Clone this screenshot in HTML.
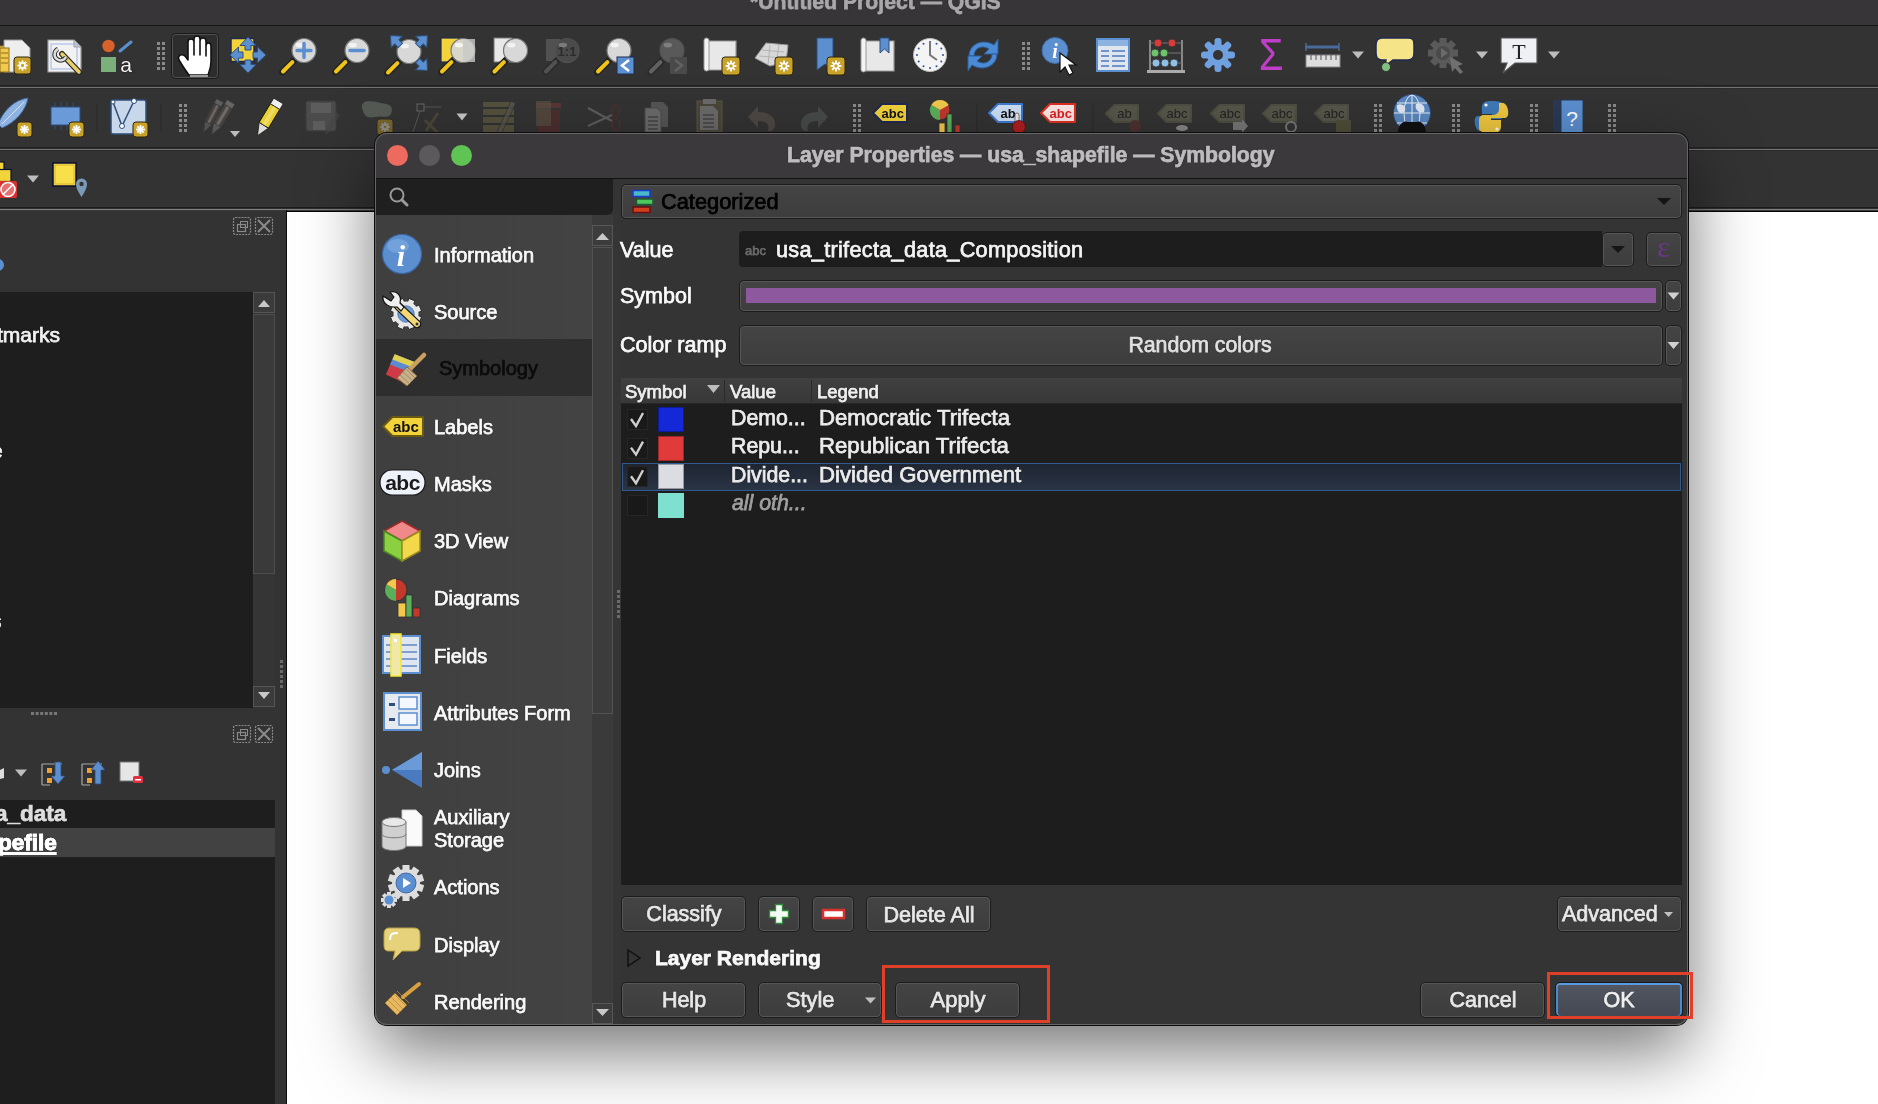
<!DOCTYPE html><html><head><meta charset="utf-8"><style>
*{box-sizing:border-box;margin:0;padding:0}
html,body{width:1878px;height:1104px;overflow:hidden;background:#333;font-family:"Liberation Sans",sans-serif;position:relative}
.a{position:absolute}
.t{position:absolute;white-space:nowrap;line-height:1;will-change:transform;-webkit-text-stroke:0.75px currentColor;text-shadow:0 0 1px rgba(0,0,0,.9),0 0 1.5px rgba(0,0,0,.6)}
.nh{text-shadow:none}
svg.full{position:absolute;left:0;top:0;width:1878px;height:1104px;overflow:visible}
.btn{position:absolute;border-radius:5px;border:1px solid #1c1c1c;background:linear-gradient(#444,#3d3d3d);box-shadow:inset 0 0 0 1px #565656}
</style></head><body>
<div class="a" style="left:0px;top:0px;width:1878px;height:25px;background:#373538"></div>
<div class="t" style="left:750.0px;top:-8.8px;font-size:21.2px;color:#a9a7aa;font-weight:bold;">*Untitled Project — QGIS</div>
<div class="a" style="left:0px;top:25px;width:1878px;height:1px;background:#161616"></div>
<div class="a" style="left:0px;top:26px;width:1878px;height:61px;background:#333"></div>
<div class="a" style="left:0px;top:85px;width:1878px;height:1px;background:#222"></div>
<div class="a" style="left:0px;top:86px;width:1878px;height:1px;background:#2b2b2b"></div>
<div class="a" style="left:0px;top:87px;width:1878px;height:1px;background:#727272"></div>
<div class="a" style="left:0px;top:88px;width:1878px;height:1px;background:#2c2c2c"></div>
<div class="a" style="left:0px;top:147px;width:1878px;height:1px;background:#222"></div>
<div class="a" style="left:0px;top:148px;width:1878px;height:1px;background:#2b2b2b"></div>
<div class="a" style="left:0px;top:149px;width:1878px;height:1px;background:#737373"></div>
<div class="a" style="left:0px;top:150px;width:1878px;height:1px;background:#2c2c2c"></div>
<div class="a" style="left:0px;top:207px;width:1878px;height:1px;background:#1c1c1c"></div>
<div class="a" style="left:0px;top:208px;width:1878px;height:1px;background:#2e2e2e"></div>
<div class="a" style="left:0px;top:209px;width:1878px;height:1px;background:#808080"></div>
<div class="a" style="left:0px;top:210px;width:1878px;height:1px;background:#3a3a3a"></div>
<svg class="full"><path d="M-4 46 H10 L13 42 H24 V70 H-4 Z" fill="#f2c94c" stroke="#8a6d1a" stroke-width="1"/><path d="M4 40 H22 L30 48 V72 H4 Z" fill="#eee" stroke="#999" stroke-width="1"/><rect x="0" y="48" width="9" height="24" fill="#f2c94c" stroke="#8a6d1a" stroke-width="1"/><line x1="1" y1="53" x2="8" y2="53" stroke="#8a6d1a"/><line x1="1" y1="58" x2="8" y2="58" stroke="#8a6d1a"/><line x1="1" y1="63" x2="8" y2="63" stroke="#8a6d1a"/><rect x="14" y="57" width="17" height="17" rx="3" fill="#c9a22a" stroke="#2a2410" stroke-width="1"/><line x1="17.4" y1="65.5" x2="27.6" y2="65.5" stroke="#fff" stroke-width="1.8"/><line x1="18.9" y1="61.9" x2="26.1" y2="69.1" stroke="#fff" stroke-width="1.8"/><line x1="22.5" y1="60.4" x2="22.5" y2="70.6" stroke="#fff" stroke-width="1.8"/><line x1="26.1" y1="61.9" x2="18.9" y2="69.1" stroke="#fff" stroke-width="1.8"/><circle cx="22.5" cy="65.5" r="2.4" fill="#c9a22a" stroke="#fff" stroke-width="1.5"/><path d="M48 40 H74 L81 47 V72 H48 Z" fill="#f2f2f2" stroke="#9a9a9a" stroke-width="1.2"/><path d="M74 40 V47 H81" fill="#ccc" stroke="#9a9a9a"/><rect x="51" y="44" width="26" height="25" fill="none" stroke="#9fb6e6" stroke-width="1"/><line x1="62" y1="54" x2="79" y2="72" stroke="#2b2b2b" stroke-width="6" stroke-linecap="round"/><line x1="62" y1="54" x2="79" y2="72" stroke="#e8cf6a" stroke-width="3.5" stroke-linecap="round"/><path d="M58 49 a6 6 0 1 0 8 8" fill="none" stroke="#2b2b2b" stroke-width="4.5"/><path d="M58 49 a6 6 0 1 0 8 8" fill="none" stroke="#ddd" stroke-width="2.5"/><circle cx="108.5" cy="46" r="6.2" fill="#d9622b"/><line x1="120" y1="51" x2="131" y2="42" stroke="#5b8fd0" stroke-width="3" stroke-linecap="round"/><rect x="101" y="57" width="15" height="15" fill="#7bb07b"/><text x="126" y="72" font-family="Liberation Sans" font-size="21" fill="#f0f0f0" text-anchor="middle" stroke="#222" stroke-width="1.2" paint-order="stroke">a</text><rect x="157" y="42" width="3" height="3" fill="#8a8a8a"/><rect x="162" y="42" width="3" height="3" fill="#8a8a8a"/><rect x="157" y="47" width="3" height="3" fill="#8a8a8a"/><rect x="162" y="47" width="3" height="3" fill="#8a8a8a"/><rect x="157" y="52" width="3" height="3" fill="#8a8a8a"/><rect x="162" y="52" width="3" height="3" fill="#8a8a8a"/><rect x="157" y="57" width="3" height="3" fill="#8a8a8a"/><rect x="162" y="57" width="3" height="3" fill="#8a8a8a"/><rect x="157" y="62" width="3" height="3" fill="#8a8a8a"/><rect x="162" y="62" width="3" height="3" fill="#8a8a8a"/><rect x="157" y="67" width="3" height="3" fill="#8a8a8a"/><rect x="162" y="67" width="3" height="3" fill="#8a8a8a"/><rect x="171.5" y="33.5" width="47" height="45" rx="4" fill="#2d2d2d" stroke="#1a1a1a" stroke-width="1"/><rect x="172.5" y="34.5" width="45" height="43" rx="3" fill="none" stroke="#505050" stroke-width="1"/><path d="M189 75 C185 70 182 65 179 60 C177 56 181 53 185 56 L188 60 V42 C188 38 194 38 194 42 V55 V39 C194 35 200 35 200 39 V55 V41 C200 37 206 37 206 41 V56 V46 C206 42 211 42 211 46 V62 C211 68 209 72 208 75 Z" fill="#fff" stroke="#111" stroke-width="1.6" stroke-linejoin="round"/><path d="M190 76 H208" stroke="#9a9a9a" stroke-width="2"/><rect x="231" y="38.5" width="23" height="23" fill="#f2d33a" stroke="#1f2a55" stroke-width="1.5"/><g transform="rotate(0 248 55)"><path d="M248 37 L256 45.5 H251 V50 H245 V45.5 H240 Z" fill="#5b8fd0" stroke="#2e4f7a" stroke-width="1"/></g><g transform="rotate(90 248 55)"><path d="M248 37 L256 45.5 H251 V50 H245 V45.5 H240 Z" fill="#5b8fd0" stroke="#2e4f7a" stroke-width="1"/></g><g transform="rotate(180 248 55)"><path d="M248 37 L256 45.5 H251 V50 H245 V45.5 H240 Z" fill="#5b8fd0" stroke="#2e4f7a" stroke-width="1"/></g><g transform="rotate(270 248 55)"><path d="M248 37 L256 45.5 H251 V50 H245 V45.5 H240 Z" fill="#5b8fd0" stroke="#2e4f7a" stroke-width="1"/></g><g><line x1="295.36" y1="59.14" x2="282.4" y2="72.1" stroke="#222" stroke-width="6.5" stroke-linecap="round"/><line x1="292.36" y1="62.14" x2="283.0" y2="71.5" stroke="#f0c419" stroke-width="4" stroke-linecap="round"/><circle cx="304" cy="50.5" r="12" fill="#d8d8d8" stroke="#777" stroke-width="1.2"/><ellipse cx="299.8" cy="45.1" rx="4.199999999999999" ry="2.4000000000000004" fill="#fff" opacity="0.7"/></g><path d="M297 50.5 H311 M304 43.5 V57.5" stroke="#5b8fd0" stroke-width="3.5" stroke-linecap="round"/><g><line x1="348.36" y1="59.14" x2="335.4" y2="72.1" stroke="#222" stroke-width="6.5" stroke-linecap="round"/><line x1="345.36" y1="62.14" x2="336.0" y2="71.5" stroke="#f0c419" stroke-width="4" stroke-linecap="round"/><circle cx="357" cy="50.5" r="12" fill="#d8d8d8" stroke="#777" stroke-width="1.2"/><ellipse cx="352.8" cy="45.1" rx="4.199999999999999" ry="2.4000000000000004" fill="#fff" opacity="0.7"/></g><path d="M350 50.5 H364" stroke="#5b8fd0" stroke-width="3.5" stroke-linecap="round"/><g><line x1="400.36" y1="60.14" x2="387.4" y2="73.1" stroke="#222" stroke-width="6.5" stroke-linecap="round"/><line x1="397.36" y1="63.14" x2="388.0" y2="72.5" stroke="#f0c419" stroke-width="4" stroke-linecap="round"/><circle cx="409" cy="51.5" r="12" fill="#d8d8d8" stroke="#777" stroke-width="1.2"/><ellipse cx="404.8" cy="46.1" rx="4.199999999999999" ry="2.4000000000000004" fill="#fff" opacity="0.7"/></g><g transform="translate(394,39) rotate(-45)"><path d="M0 -5 L8 4 H3 V9 H-3 V4 H-8 Z" fill="#5b8fd0" stroke="#2e4f7a" stroke-width="1"/></g><g transform="translate(424,39) rotate(45)"><path d="M0 -5 L8 4 H3 V9 H-3 V4 H-8 Z" fill="#5b8fd0" stroke="#2e4f7a" stroke-width="1"/></g><g transform="translate(424,67) rotate(135)"><path d="M0 -5 L8 4 H3 V9 H-3 V4 H-8 Z" fill="#5b8fd0" stroke="#2e4f7a" stroke-width="1"/></g><rect x="441" y="38" width="18" height="24" fill="#f2d33a" stroke="#1f2a55" stroke-width="1.2"/><g><line x1="454.36" y1="59.14" x2="441.4" y2="72.1" stroke="#222" stroke-width="6.5" stroke-linecap="round"/><line x1="451.36" y1="62.14" x2="442.0" y2="71.5" stroke="#f0c419" stroke-width="4" stroke-linecap="round"/><circle cx="463" cy="50.5" r="12" fill="#d8d6c8" stroke="#777" stroke-width="1.2"/><ellipse cx="458.8" cy="45.1" rx="4.199999999999999" ry="2.4000000000000004" fill="#fff" opacity="0.7"/></g><rect x="463" y="39" width="12" height="23" fill="#c8c8c8" opacity="0.8"/><rect x="494" y="38" width="18" height="24" fill="#e8e8e8" stroke="#777" stroke-width="1"/><g><line x1="506.86" y1="59.14" x2="493.9" y2="72.1" stroke="#222" stroke-width="6.5" stroke-linecap="round"/><line x1="503.86" y1="62.14" x2="494.5" y2="71.5" stroke="#f0c419" stroke-width="4" stroke-linecap="round"/><circle cx="515.5" cy="50.5" r="12" fill="#d8d8d8" stroke="#777" stroke-width="1.2"/><ellipse cx="511.3" cy="45.1" rx="4.199999999999999" ry="2.4000000000000004" fill="#fff" opacity="0.7"/></g><g opacity="0.45"><rect x="546" y="39" width="14" height="22" fill="#777"/><g><line x1="558.36" y1="59.14" x2="545.4" y2="72.1" stroke="#222" stroke-width="6.5" stroke-linecap="round"/><line x1="555.36" y1="62.14" x2="546.0" y2="71.5" stroke="#777" stroke-width="4" stroke-linecap="round"/><circle cx="567" cy="50.5" r="12" fill="#666" stroke="#777" stroke-width="1.2"/><ellipse cx="562.8" cy="45.1" rx="4.199999999999999" ry="2.4000000000000004" fill="#fff" opacity="0.7"/></g><text x="567" y="56" font-family="Liberation Sans" font-weight="bold" font-size="13" fill="#222" text-anchor="middle">1:1</text></g><g><line x1="610.36" y1="59.14" x2="597.4" y2="72.1" stroke="#222" stroke-width="6.5" stroke-linecap="round"/><line x1="607.36" y1="62.14" x2="598.0" y2="71.5" stroke="#f0c419" stroke-width="4" stroke-linecap="round"/><circle cx="619" cy="50.5" r="12" fill="#d8d8d8" stroke="#777" stroke-width="1.2"/><ellipse cx="614.8" cy="45.1" rx="4.199999999999999" ry="2.4000000000000004" fill="#fff" opacity="0.7"/></g><rect x="617" y="57" width="17" height="17" fill="#5b8fd0" stroke="#1f2a55" stroke-width="1"/><path d="M629 60 L622 65.5 L629 71" fill="none" stroke="#fff" stroke-width="2.5"/><g opacity="0.45"><g><line x1="663.36" y1="59.14" x2="650.4" y2="72.1" stroke="#222" stroke-width="6.5" stroke-linecap="round"/><line x1="660.36" y1="62.14" x2="651.0" y2="71.5" stroke="#999" stroke-width="4" stroke-linecap="round"/><circle cx="672" cy="50.5" r="12" fill="#888" stroke="#777" stroke-width="1.2"/><ellipse cx="667.8" cy="45.1" rx="4.199999999999999" ry="2.4000000000000004" fill="#fff" opacity="0.7"/></g><rect x="670" y="57" width="17" height="17" fill="#666"/><path d="M675 60 L682 65.5 L675 71" fill="none" stroke="#999" stroke-width="2.5"/></g><path d="M706 41 H736 V70 H710 C705 70 704 67 706 64 Z" fill="#e8e8e8" stroke="#999" stroke-width="1.2"/><rect x="704" y="38" width="5" height="33" rx="2.5" fill="#f4f4f4" stroke="#999"/><rect x="722" y="57" width="18" height="18" rx="3" fill="#c9a22a" stroke="#2a2410" stroke-width="1"/><line x1="725.6" y1="66.0" x2="736.4" y2="66.0" stroke="#fff" stroke-width="1.8"/><line x1="727.2" y1="62.2" x2="734.8" y2="69.8" stroke="#fff" stroke-width="1.8"/><line x1="731.0" y1="60.6" x2="731.0" y2="71.4" stroke="#fff" stroke-width="1.8"/><line x1="734.8" y1="62.2" x2="727.2" y2="69.8" stroke="#fff" stroke-width="1.8"/><circle cx="731.0" cy="66.0" r="2.5" fill="#c9a22a" stroke="#fff" stroke-width="1.5"/><path d="M755 58 L766 43 L788 45 L786 62 L770 66 Z" fill="#d8d8d8" stroke="#999" stroke-width="1"/><path d="M762 50 L784 52 M759 56 L782 58 M770 45 L768 65 M779 45 L776 64" stroke="#aaa" stroke-width="0.8" fill="none"/><rect x="775" y="57" width="18" height="18" rx="3" fill="#c9a22a" stroke="#2a2410" stroke-width="1"/><line x1="778.6" y1="66.0" x2="789.4" y2="66.0" stroke="#fff" stroke-width="1.8"/><line x1="780.2" y1="62.2" x2="787.8" y2="69.8" stroke="#fff" stroke-width="1.8"/><line x1="784.0" y1="60.6" x2="784.0" y2="71.4" stroke="#fff" stroke-width="1.8"/><line x1="787.8" y1="62.2" x2="780.2" y2="69.8" stroke="#fff" stroke-width="1.8"/><circle cx="784.0" cy="66.0" r="2.5" fill="#c9a22a" stroke="#fff" stroke-width="1.5"/><path d="M817 38 H833 V70 L825 64 L817 70 Z" fill="#5b8fd0" stroke="#2e4f7a" stroke-width="1"/><rect x="827" y="57" width="18" height="18" rx="3" fill="#c9a22a" stroke="#2a2410" stroke-width="1"/><line x1="830.6" y1="66.0" x2="841.4" y2="66.0" stroke="#fff" stroke-width="1.8"/><line x1="832.2" y1="62.2" x2="839.8" y2="69.8" stroke="#fff" stroke-width="1.8"/><line x1="836.0" y1="60.6" x2="836.0" y2="71.4" stroke="#fff" stroke-width="1.8"/><line x1="839.8" y1="62.2" x2="832.2" y2="69.8" stroke="#fff" stroke-width="1.8"/><circle cx="836.0" cy="66.0" r="2.5" fill="#c9a22a" stroke="#fff" stroke-width="1.5"/><path d="M864 41 H894 V71 H868 C862 71 862 67 864 65 Z" fill="#e8e8e8" stroke="#999" stroke-width="1.2"/><rect x="861" y="38" width="5" height="34" rx="2.5" fill="#f4f4f4" stroke="#999"/><path d="M880 38 H889 V53 L884.5 49 L880 53 Z" fill="#5b8fd0" stroke="#2e4f7a" stroke-width="1"/><circle cx="930" cy="55" r="16.5" fill="#f4f4f4" stroke="#bbb" stroke-width="1"/><circle cx="943.0" cy="55.0" r="1" fill="#2e4f9a"/><circle cx="941.3" cy="61.5" r="1" fill="#2e4f9a"/><circle cx="936.5" cy="66.3" r="1" fill="#2e4f9a"/><circle cx="930.0" cy="68.0" r="1" fill="#2e4f9a"/><circle cx="923.5" cy="66.3" r="1" fill="#2e4f9a"/><circle cx="918.7" cy="61.5" r="1" fill="#2e4f9a"/><circle cx="917.0" cy="55.0" r="1" fill="#2e4f9a"/><circle cx="918.7" cy="48.5" r="1" fill="#2e4f9a"/><circle cx="923.5" cy="43.7" r="1" fill="#2e4f9a"/><circle cx="930.0" cy="42.0" r="1" fill="#2e4f9a"/><circle cx="936.5" cy="43.7" r="1" fill="#2e4f9a"/><circle cx="941.3" cy="48.5" r="1" fill="#2e4f9a"/><path d="M930 42 V55 L937 60" fill="none" stroke="#777" stroke-width="2"/><path d="M969 56 C969 44 983 38 994 45 L998 39 V54 H984 L989 49 C981 44 974 49 974 56 Z" fill="#4a8ad6" stroke="#2e5f9a" stroke-width="1"/><path d="M997 54 C997 66 983 72 972 65 L968 71 V56 H982 L977 61 C985 66 992 61 992 54 Z" fill="#4a8ad6" stroke="#2e5f9a" stroke-width="1"/><rect x="1022" y="42" width="3" height="3" fill="#8a8a8a"/><rect x="1027" y="42" width="3" height="3" fill="#8a8a8a"/><rect x="1022" y="47" width="3" height="3" fill="#8a8a8a"/><rect x="1027" y="47" width="3" height="3" fill="#8a8a8a"/><rect x="1022" y="52" width="3" height="3" fill="#8a8a8a"/><rect x="1027" y="52" width="3" height="3" fill="#8a8a8a"/><rect x="1022" y="57" width="3" height="3" fill="#8a8a8a"/><rect x="1027" y="57" width="3" height="3" fill="#8a8a8a"/><rect x="1022" y="62" width="3" height="3" fill="#8a8a8a"/><rect x="1027" y="62" width="3" height="3" fill="#8a8a8a"/><rect x="1022" y="67" width="3" height="3" fill="#8a8a8a"/><rect x="1027" y="67" width="3" height="3" fill="#8a8a8a"/><circle cx="1055" cy="50.5" r="13" fill="#5b8fd0" stroke="#3e6aa6" stroke-width="1"/><text x="1055" y="58" font-family="Liberation Serif" font-style="italic" font-weight="bold" font-size="20" fill="#fff" text-anchor="middle">i</text><path d="M1060 53 L1060 72 L1065 67 L1069 75 L1073 73 L1069 65 L1076 65 Z" fill="#fff" stroke="#111" stroke-width="1.2"/><rect x="1097" y="39" width="32" height="32" fill="#dfe6f0" stroke="#5b8fd0" stroke-width="2"/><rect x="1098" y="40" width="30" height="6" fill="#8fb3e0"/><line x1="1101" y1="51" x2="1109" y2="51" stroke="#4a7ac0" stroke-width="1.5"/><line x1="1112" y1="51" x2="1125" y2="51" stroke="#4a7ac0" stroke-width="1.5"/><line x1="1101" y1="56" x2="1109" y2="56" stroke="#4a7ac0" stroke-width="1.5"/><line x1="1112" y1="56" x2="1125" y2="56" stroke="#4a7ac0" stroke-width="1.5"/><line x1="1101" y1="61" x2="1109" y2="61" stroke="#4a7ac0" stroke-width="1.5"/><line x1="1112" y1="61" x2="1125" y2="61" stroke="#4a7ac0" stroke-width="1.5"/><line x1="1101" y1="66" x2="1109" y2="66" stroke="#4a7ac0" stroke-width="1.5"/><line x1="1112" y1="66" x2="1125" y2="66" stroke="#4a7ac0" stroke-width="1.5"/><rect x="1149" y="40" width="2" height="30" fill="#888"/><rect x="1181" y="40" width="2" height="30" fill="#888"/><rect x="1147" y="70" width="38" height="3" fill="#aaa"/><line x1="1150" y1="43" x2="1182" y2="43" stroke="#777" stroke-width="1"/><circle cx="1158" cy="43" r="4" fill="#d93a3a" stroke="#333" stroke-width="0.8"/><circle cx="1172" cy="43" r="4" fill="#d93a3a" stroke="#333" stroke-width="0.8"/><line x1="1150" y1="53" x2="1182" y2="53" stroke="#777" stroke-width="1"/><circle cx="1155" cy="53" r="4" fill="#6cc46c" stroke="#333" stroke-width="0.8"/><circle cx="1164" cy="53" r="4" fill="#6cc46c" stroke="#333" stroke-width="0.8"/><line x1="1150" y1="63" x2="1182" y2="63" stroke="#777" stroke-width="1"/><circle cx="1156" cy="63" r="4" fill="#8fc0e8" stroke="#333" stroke-width="0.8"/><circle cx="1165" cy="63" r="4" fill="#8fc0e8" stroke="#333" stroke-width="0.8"/><circle cx="1174" cy="63" r="4" fill="#8fc0e8" stroke="#333" stroke-width="0.8"/><g transform="translate(1218,55)"><rect x="-3.5" y="-17" width="7" height="10" rx="3" fill="#6fa0e0" transform="rotate(0)"/><rect x="-3.5" y="-17" width="7" height="10" rx="3" fill="#6fa0e0" transform="rotate(45)"/><rect x="-3.5" y="-17" width="7" height="10" rx="3" fill="#6fa0e0" transform="rotate(90)"/><rect x="-3.5" y="-17" width="7" height="10" rx="3" fill="#6fa0e0" transform="rotate(135)"/><rect x="-3.5" y="-17" width="7" height="10" rx="3" fill="#6fa0e0" transform="rotate(180)"/><rect x="-3.5" y="-17" width="7" height="10" rx="3" fill="#6fa0e0" transform="rotate(225)"/><rect x="-3.5" y="-17" width="7" height="10" rx="3" fill="#6fa0e0" transform="rotate(270)"/><rect x="-3.5" y="-17" width="7" height="10" rx="3" fill="#6fa0e0" transform="rotate(315)"/><circle r="11" fill="#6fa0e0"/><circle r="5" fill="#333"/></g><text x="1271" y="70" font-family="Liberation Sans" font-size="40" fill="#c03ec8" text-anchor="middle" transform="translate(1271 0) scale(1 1.1) translate(-1271 -6.5)">Σ</text><line x1="1305" y1="47" x2="1339" y2="47" stroke="#4a6a9a" stroke-width="3"/><line x1="1306" y1="43" x2="1306" y2="51" stroke="#4a6a9a" stroke-width="1.5"/><line x1="1339" y1="43" x2="1339" y2="51" stroke="#4a6a9a" stroke-width="1.5"/><rect x="1306" y="55" width="34" height="12" fill="#ddd" stroke="#888" stroke-width="1"/><line x1="1311" y1="55" x2="1311" y2="60" stroke="#555" stroke-width="1"/><line x1="1316" y1="55" x2="1316" y2="60" stroke="#555" stroke-width="1"/><line x1="1321" y1="55" x2="1321" y2="60" stroke="#555" stroke-width="1"/><line x1="1326" y1="55" x2="1326" y2="60" stroke="#555" stroke-width="1"/><line x1="1331" y1="55" x2="1331" y2="60" stroke="#555" stroke-width="1"/><line x1="1336" y1="55" x2="1336" y2="60" stroke="#555" stroke-width="1"/><polygon points="1352.0,51.5 1364.0,51.5 1358,58.5" fill="#bdbdbd"/><path d="M1382 38 H1408 C1413 38 1414 40 1414 45 V53 C1414 58 1412 60 1408 60 H1393 L1385 66 L1386 60 H1382 C1378 60 1376 58 1376 53 V45 C1376 40 1378 38 1382 38 Z" fill="#f5e488" stroke="#1f2a55" stroke-width="1.5"/><circle cx="1386" cy="67" r="4.5" fill="#7fbf7f" stroke="#2a2a2a" stroke-width="0.8"/><g transform="translate(1443,53)"><rect x="-3.5" y="-15" width="7" height="8" fill="#5a5a5a" transform="rotate(0)"/><rect x="-3.5" y="-15" width="7" height="8" fill="#5a5a5a" transform="rotate(45)"/><rect x="-3.5" y="-15" width="7" height="8" fill="#5a5a5a" transform="rotate(90)"/><rect x="-3.5" y="-15" width="7" height="8" fill="#5a5a5a" transform="rotate(135)"/><rect x="-3.5" y="-15" width="7" height="8" fill="#5a5a5a" transform="rotate(180)"/><rect x="-3.5" y="-15" width="7" height="8" fill="#5a5a5a" transform="rotate(225)"/><rect x="-3.5" y="-15" width="7" height="8" fill="#5a5a5a" transform="rotate(270)"/><rect x="-3.5" y="-15" width="7" height="8" fill="#5a5a5a" transform="rotate(315)"/><circle r="11" fill="#5a5a5a"/><circle r="7" fill="#4a4a4a"/><path d="M-2 -5 L5 0 L-2 5 Z" fill="#6a6a6a"/></g><path d="M1450 57 L1452 72 L1455 68 L1460 74 L1463 72 L1458 66 L1463 64 Z" fill="#707070"/><polygon points="1476.0,51.5 1488.0,51.5 1482,58.5" fill="#bdbdbd"/><path d="M1501 38 H1537 V63 H1515 L1503 73 L1507 63 H1501 Z" fill="#eef0f3" stroke="#555" stroke-width="1.2"/><text x="1519" y="59" font-family="Liberation Serif" font-size="22" fill="#222" text-anchor="middle">T</text><polygon points="1548.0,51.5 1560.0,51.5 1554,58.5" fill="#bdbdbd"/><clipPath id="c2"><rect x="0" y="88" width="1878" height="59"/></clipPath><g clip-path="url(#c2)"><path d="M-2 124 C4 110 14 100 28 98 C26 110 16 122 2 128 Z" fill="#8fb3e0" stroke="#3e6aa6" stroke-width="1"/><path d="M2 124 L24 102" stroke="#eef" stroke-width="0.8"/><rect x="17" y="122" width="15" height="15" rx="3" fill="#c9a22a" stroke="#2a2410" stroke-width="1"/><line x1="20.0" y1="129.5" x2="29.0" y2="129.5" stroke="#fff" stroke-width="1.8"/><line x1="21.3" y1="126.3" x2="27.7" y2="132.7" stroke="#fff" stroke-width="1.8"/><line x1="24.5" y1="125.0" x2="24.5" y2="134.0" stroke="#fff" stroke-width="1.8"/><line x1="27.7" y1="126.3" x2="21.3" y2="132.7" stroke="#fff" stroke-width="1.8"/><rect x="51" y="107" width="29" height="18" fill="#6a9ad8" stroke="#2e4f7a" stroke-width="1"/><line x1="55" y1="102" x2="55" y2="107" stroke="#2e4f7a" stroke-width="1"/><line x1="55" y1="125" x2="55" y2="130" stroke="#2e4f7a" stroke-width="1"/><line x1="61" y1="102" x2="61" y2="107" stroke="#2e4f7a" stroke-width="1"/><line x1="61" y1="125" x2="61" y2="130" stroke="#2e4f7a" stroke-width="1"/><line x1="67" y1="102" x2="67" y2="107" stroke="#2e4f7a" stroke-width="1"/><line x1="67" y1="125" x2="67" y2="130" stroke="#2e4f7a" stroke-width="1"/><line x1="73" y1="102" x2="73" y2="107" stroke="#2e4f7a" stroke-width="1"/><line x1="73" y1="125" x2="73" y2="130" stroke="#2e4f7a" stroke-width="1"/><rect x="69" y="122" width="15" height="15" rx="3" fill="#c9a22a" stroke="#2a2410" stroke-width="1"/><line x1="72.0" y1="129.5" x2="81.0" y2="129.5" stroke="#fff" stroke-width="1.8"/><line x1="73.3" y1="126.3" x2="79.7" y2="132.7" stroke="#fff" stroke-width="1.8"/><line x1="76.5" y1="125.0" x2="76.5" y2="134.0" stroke="#fff" stroke-width="1.8"/><line x1="79.7" y1="126.3" x2="73.3" y2="132.7" stroke="#fff" stroke-width="1.8"/><line x1="97" y1="103" x2="97" y2="132" stroke="#2a2a2a" stroke-width="1"/><rect x="111" y="100" width="35" height="34" rx="2" fill="#c8d8ea" stroke="#2e4f7a" stroke-width="1.5"/><path d="M113 102 L122 126 L134 101" fill="none" stroke="#2e4f7a" stroke-width="1.5"/><circle cx="113" cy="102" r="2" fill="#fff" stroke="#2e4f7a"/><circle cx="134" cy="101" r="2.5" fill="#fff" stroke="#2e4f7a"/><circle cx="122" cy="126" r="2.5" fill="#fff" stroke="#2e4f7a"/><rect x="133" y="122" width="15" height="15" rx="3" fill="#c9a22a" stroke="#2a2410" stroke-width="1"/><line x1="136.0" y1="129.5" x2="145.0" y2="129.5" stroke="#fff" stroke-width="1.8"/><line x1="137.3" y1="126.3" x2="143.7" y2="132.7" stroke="#fff" stroke-width="1.8"/><line x1="140.5" y1="125.0" x2="140.5" y2="134.0" stroke="#fff" stroke-width="1.8"/><line x1="143.7" y1="126.3" x2="137.3" y2="132.7" stroke="#fff" stroke-width="1.8"/><line x1="161" y1="103" x2="161" y2="132" stroke="#2a2a2a" stroke-width="1"/><rect x="179" y="104" width="3" height="3" fill="#8a8a8a"/><rect x="184" y="104" width="3" height="3" fill="#8a8a8a"/><rect x="179" y="109" width="3" height="3" fill="#8a8a8a"/><rect x="184" y="109" width="3" height="3" fill="#8a8a8a"/><rect x="179" y="114" width="3" height="3" fill="#8a8a8a"/><rect x="184" y="114" width="3" height="3" fill="#8a8a8a"/><rect x="179" y="119" width="3" height="3" fill="#8a8a8a"/><rect x="184" y="119" width="3" height="3" fill="#8a8a8a"/><rect x="179" y="124" width="3" height="3" fill="#8a8a8a"/><rect x="184" y="124" width="3" height="3" fill="#8a8a8a"/><rect x="179" y="129" width="3" height="3" fill="#8a8a8a"/><rect x="184" y="129" width="3" height="3" fill="#8a8a8a"/><g opacity="0.8"><polygon points="203.5,132.5 204.9,121.1 212.0,124.7" fill="#5a5a5a" stroke="#3a3a3a" stroke-width="0.8"/><polygon points="204.9,121.1 214.1,103.1 221.2,106.8 212.0,124.7" fill="#4a4440" stroke="#3a3a3a" stroke-width="1"/><polygon points="207.3,122.3 216.5,104.4 218.9,105.6 209.6,123.5" fill="#fff" opacity="0.25"/><polygon points="214.1,103.1 216.4,98.7 223.6,102.3 221.2,106.8" fill="#6a6a6a" stroke="#3a3a3a" stroke-width="0.8"/></g><g opacity="0.85"><polygon points="211.5,134.5 213.5,122.4 221.2,127.1" fill="#606060" stroke="#3a3a3a" stroke-width="0.8"/><polygon points="213.5,122.4 224.4,104.2 232.1,108.9 221.2,127.1" fill="#4e4844" stroke="#3a3a3a" stroke-width="1"/><polygon points="216.1,124.0 227.0,105.8 229.6,107.3 218.6,125.5" fill="#fff" opacity="0.25"/><polygon points="224.4,104.2 227.1,99.7 234.9,104.3 232.1,108.9" fill="#707070" stroke="#3a3a3a" stroke-width="0.8"/></g><polygon points="230.0,131.0 240.0,131.0 235,137.0" fill="#bdbdbd"/><g><polygon points="257.5,135.7 259.1,122.4 268.5,128.1" fill="#dcdcdc" stroke="#1a1a10" stroke-width="0.8"/><polygon points="259.1,122.4 270.4,103.7 279.8,109.4 268.5,128.1" fill="#e8d030" stroke="#1a1a10" stroke-width="1"/><polygon points="262.2,124.3 273.6,105.6 276.7,107.5 265.4,126.2" fill="#fff" opacity="0.25"/><polygon points="270.4,103.7 273.8,98.2 283.2,103.8 279.8,109.4" fill="#f0f0f0" stroke="#1a1a10" stroke-width="0.8"/></g><g opacity="0.5"><rect x="306" y="101" width="30" height="30" rx="2" fill="#666" stroke="#444"/><rect x="311" y="103" width="20" height="10" fill="#888"/><rect x="313" y="121" width="12" height="9" fill="#888"/></g><path d="M326 130 L325 135 L330 132 L340 115 L336 112 Z" fill="#4a4544" opacity="0.6"/><path d="M362 108 C360 100 372 100 380 103 C390 104 394 106 391 114 C388 119 383 115 375 117 C365 119 364 114 362 108 Z" fill="#565a55"/><g opacity="0.45"><rect x="377" y="119" width="16" height="16" rx="3" fill="#c9a22a" stroke="#2a2410" stroke-width="1"/><line x1="380.2" y1="127.0" x2="389.8" y2="127.0" stroke="#fff" stroke-width="1.8"/><line x1="381.6" y1="123.6" x2="388.4" y2="130.4" stroke="#fff" stroke-width="1.8"/><line x1="385.0" y1="122.2" x2="385.0" y2="131.8" stroke="#fff" stroke-width="1.8"/><line x1="388.4" y1="123.6" x2="381.6" y2="130.4" stroke="#fff" stroke-width="1.8"/><circle cx="385.0" cy="127.0" r="2.2" fill="#c9a22a" stroke="#fff" stroke-width="1.5"/></g><g opacity="0.45"><rect x="417" y="104" width="7" height="7" fill="none" stroke="#aaa"/><line x1="424" y1="107" x2="441" y2="107" stroke="#888"/><line x1="420" y1="111" x2="413" y2="132" stroke="#888"/><path d="M425 120 L438 133 M438 113 L426 131" stroke="#6a6040" stroke-width="3"/></g><polygon points="456.5,113.5 467.5,113.5 462,120.5" fill="#c8c8c8"/><g opacity="0.4"><rect x="483" y="102" width="31" height="32" fill="#8a8050"/><line x1="483" y1="108" x2="514" y2="108" stroke="#333" stroke-width="2"/><line x1="483" y1="116" x2="514" y2="116" stroke="#333" stroke-width="2"/><line x1="483" y1="124" x2="514" y2="124" stroke="#333" stroke-width="2"/></g><path d="M497 132 L496 138 L501 134 L516 103 L511 101 Z" fill="#5a5550" stroke="#333" opacity="0.7"/><g opacity="0.45"><rect x="536" y="103" width="25" height="5" fill="#8a3a3a"/><rect x="538" y="110" width="22" height="24" fill="#6a2a2a"/><rect x="536" y="101" width="15" height="25" fill="#8a8060" opacity="0.6"/></g><g opacity="0.6"><path d="M588 108 L612 121 M588 126 L612 115" stroke="#7a7a7a" stroke-width="2"/><ellipse cx="616" cy="111" rx="4" ry="5.5" fill="none" stroke="#7a2a2a" stroke-width="1.2"/><ellipse cx="616" cy="125" rx="4" ry="5.5" fill="none" stroke="#7a2a2a" stroke-width="1.2"/></g><path d="M651 102 H663 L668 107 V127 H651 Z" fill="#555"/><path d="M645 108 H657 L661 112 V132 H645 Z" fill="#6a6a6a" stroke="#4a4a4a"/><line x1="648" y1="117" x2="658" y2="117" stroke="#3a3a3a" stroke-width="1.2"/><line x1="648" y1="121" x2="658" y2="121" stroke="#3a3a3a" stroke-width="1.2"/><line x1="648" y1="125" x2="658" y2="125" stroke="#3a3a3a" stroke-width="1.2"/><line x1="648" y1="129" x2="658" y2="129" stroke="#3a3a3a" stroke-width="1.2"/><rect x="697" y="101" width="25" height="31" fill="#4a4638" stroke="#5a5548"/><rect x="703" y="99" width="13" height="5" fill="#6a6a6a"/><path d="M700 106 H713 L718 111 V130 H700 Z" fill="#6a6a6a"/><line x1="703" y1="115" x2="714" y2="115" stroke="#3a3a3a" stroke-width="1.2"/><line x1="703" y1="119" x2="714" y2="119" stroke="#3a3a3a" stroke-width="1.2"/><line x1="703" y1="123" x2="714" y2="123" stroke="#3a3a3a" stroke-width="1.2"/><line x1="703" y1="127" x2="714" y2="127" stroke="#3a3a3a" stroke-width="1.2"/><path d="M748 117 L758 106 V112 C770 112 776 118 775 126 C774 131 770 132 768 131 C770 124 766 121 758 121 V128 Z" fill="#4e4844"/><path d="M828 117 L818 106 V112 C806 112 800 118 801 126 C802 131 806 132 808 131 C806 124 810 121 818 121 V128 Z" fill="#464a48"/><rect x="853" y="104" width="3" height="3" fill="#8a8a8a"/><rect x="858" y="104" width="3" height="3" fill="#8a8a8a"/><rect x="853" y="109" width="3" height="3" fill="#8a8a8a"/><rect x="858" y="109" width="3" height="3" fill="#8a8a8a"/><rect x="853" y="114" width="3" height="3" fill="#8a8a8a"/><rect x="858" y="114" width="3" height="3" fill="#8a8a8a"/><rect x="853" y="119" width="3" height="3" fill="#8a8a8a"/><rect x="858" y="119" width="3" height="3" fill="#8a8a8a"/><rect x="853" y="124" width="3" height="3" fill="#8a8a8a"/><rect x="858" y="124" width="3" height="3" fill="#8a8a8a"/><rect x="853" y="129" width="3" height="3" fill="#8a8a8a"/><rect x="858" y="129" width="3" height="3" fill="#8a8a8a"/><path d="M873 113.0 L882.0 104 H907 V122 H882.0 Z" fill="#f2d33a" stroke="#1f2a55" stroke-width="2" stroke-linejoin="round"/><text x="892.6999999999999" y="118.04" font-family="Liberation Sans" font-weight="bold" font-size="13" fill="#111" text-anchor="middle">abc</text><circle cx="940" cy="110" r="10" fill="#c0392b" stroke="#333" stroke-width="1"/><path d="M940 110 L931.3 105 A10 10 0 0 1 948.7 105 Z" fill="#f2c94c"/><path d="M940 110 L931.3 105 A10 10 0 0 0 940 120 Z" fill="#5ab05a"/><rect x="939" y="123" width="6" height="10" fill="#f2c94c" stroke="#333" stroke-width="0.8"/><rect x="947" y="114" width="5" height="19" fill="#5ab05a" stroke="#333" stroke-width="0.8"/><rect x="955" y="125" width="5" height="8" fill="#c0392b" stroke="#333" stroke-width="0.8"/><line x1="977" y1="103" x2="977" y2="132" stroke="#2a2a2a" stroke-width="1"/><path d="M989 113.0 L998.0 104 H1022 V122 H998.0 Z" fill="#cfe0f5" stroke="#3e7ad0" stroke-width="2" stroke-linejoin="round"/><text x="1008.1999999999999" y="118.04" font-family="Liberation Sans" font-weight="bold" font-size="13" fill="#111" text-anchor="middle">ab</text><rect x="1015" y="113" width="4" height="10" rx="2" fill="#eee" stroke="#555" stroke-width="0.8"/><circle cx="1019" cy="127" r="6.5" fill="#b01f1f" stroke="#5a1010" stroke-width="0.8"/><path d="M1041 113.0 L1050.0 104 H1075 V122 H1050.0 Z" fill="#fde8e8" stroke="#e03020" stroke-width="2" stroke-linejoin="round"/><text x="1060.7" y="118.04" font-family="Liberation Sans" font-weight="bold" font-size="13" fill="#e02020" text-anchor="middle">abc</text><line x1="1093" y1="103" x2="1093" y2="132" stroke="#2a2a2a" stroke-width="1"/><g opacity="0.5"><path d="M1106 113.5 L1114.5 105 H1138 V122 H1114.5 Z" fill="#7a7a62" stroke="#6a6a55" stroke-width="2" stroke-linejoin="round"/><text x="1124.55" y="118.26" font-family="Liberation Sans" font-weight="normal" font-size="13" fill="#111" text-anchor="middle">ab</text><circle cx="1135" cy="126" r="6" fill="#6a3030"/></g><g opacity="0.5"><path d="M1158 113.5 L1166.5 105 H1191 V122 H1166.5 Z" fill="#7a7a62" stroke="#6a6a55" stroke-width="2" stroke-linejoin="round"/><text x="1177.05" y="118.26" font-family="Liberation Sans" font-weight="normal" font-size="13" fill="#111" text-anchor="middle">abc</text><ellipse cx="1182" cy="128" rx="6" ry="3" fill="#ddd"/></g><g opacity="0.5"><path d="M1211 113.5 L1219.5 105 H1244 V122 H1219.5 Z" fill="#7a7a62" stroke="#6a6a55" stroke-width="2" stroke-linejoin="round"/><text x="1230.05" y="118.26" font-family="Liberation Sans" font-weight="normal" font-size="13" fill="#111" text-anchor="middle">abc</text><path d="M1233 122 H1242 V119 L1248 126 L1242 133 V130 H1233 Z" fill="#bbb"/></g><g opacity="0.5"><path d="M1263 113.5 L1271.5 105 H1296 V122 H1271.5 Z" fill="#7a7a62" stroke="#6a6a55" stroke-width="2" stroke-linejoin="round"/><text x="1282.05" y="118.26" font-family="Liberation Sans" font-weight="normal" font-size="13" fill="#111" text-anchor="middle">abc</text><circle cx="1291" cy="127" r="5" fill="none" stroke="#bbb" stroke-width="2"/></g><g opacity="0.5"><path d="M1315 113.5 L1323.5 105 H1348 V122 H1323.5 Z" fill="#7a7a62" stroke="#6a6a55" stroke-width="2" stroke-linejoin="round"/><text x="1334.05" y="118.26" font-family="Liberation Sans" font-weight="normal" font-size="13" fill="#111" text-anchor="middle">abc</text><rect x="1336" y="120" width="15" height="14" fill="#6a6a40"/></g><rect x="1374" y="104" width="3" height="3" fill="#8a8a8a"/><rect x="1379" y="104" width="3" height="3" fill="#8a8a8a"/><rect x="1374" y="109" width="3" height="3" fill="#8a8a8a"/><rect x="1379" y="109" width="3" height="3" fill="#8a8a8a"/><rect x="1374" y="114" width="3" height="3" fill="#8a8a8a"/><rect x="1379" y="114" width="3" height="3" fill="#8a8a8a"/><rect x="1374" y="119" width="3" height="3" fill="#8a8a8a"/><rect x="1379" y="119" width="3" height="3" fill="#8a8a8a"/><rect x="1374" y="124" width="3" height="3" fill="#8a8a8a"/><rect x="1379" y="124" width="3" height="3" fill="#8a8a8a"/><rect x="1374" y="129" width="3" height="3" fill="#8a8a8a"/><rect x="1379" y="129" width="3" height="3" fill="#8a8a8a"/><circle cx="1412" cy="113" r="18.5" fill="#5a88c0" stroke="#2e4f7a" stroke-width="1"/><path d="M1394 113 H1430 M1412 95 V131 M1397 103 H1427 M1397 123 H1427" stroke="#e8eef8" stroke-width="1" fill="none"/><ellipse cx="1412" cy="113" rx="8" ry="18" fill="none" stroke="#e8eef8" stroke-width="1"/><path d="M1397 105 C1402 102 1408 108 1404 112 C1400 116 1396 110 1397 105 Z M1416 104 C1422 102 1426 106 1424 112 C1420 114 1414 110 1416 104 Z" fill="#dfe8f4"/><path d="M1398 133 C1398 124 1404 120 1408 122 L1416 122 C1420 120 1426 124 1426 133 Z" fill="#111"/><rect x="1452" y="104" width="3" height="3" fill="#8a8a8a"/><rect x="1457" y="104" width="3" height="3" fill="#8a8a8a"/><rect x="1452" y="109" width="3" height="3" fill="#8a8a8a"/><rect x="1457" y="109" width="3" height="3" fill="#8a8a8a"/><rect x="1452" y="114" width="3" height="3" fill="#8a8a8a"/><rect x="1457" y="114" width="3" height="3" fill="#8a8a8a"/><rect x="1452" y="119" width="3" height="3" fill="#8a8a8a"/><rect x="1457" y="119" width="3" height="3" fill="#8a8a8a"/><rect x="1452" y="124" width="3" height="3" fill="#8a8a8a"/><rect x="1457" y="124" width="3" height="3" fill="#8a8a8a"/><rect x="1452" y="129" width="3" height="3" fill="#8a8a8a"/><rect x="1457" y="129" width="3" height="3" fill="#8a8a8a"/><path d="M1491 101 C1481 101 1482 106 1482 110 V114 H1492 V116 H1478 C1472 116 1475 131 1480 131 H1484 V125 C1484 121 1487 119 1491 119 H1499 C1502 119 1504 117 1504 114 V106 C1504 102 1499 101 1491 101 Z" fill="#3f7ab8"/><path d="M1492 133 C1502 133 1501 128 1501 124 V120 H1491 V118 H1505 C1511 118 1508 103 1503 103 H1499 V109 C1499 113 1496 115 1492 115 H1484 C1481 115 1479 117 1479 120 V128 C1479 132 1484 133 1492 133 Z" fill="#f0c840"/><circle cx="1486" cy="105" r="1.6" fill="#fff"/><circle cx="1497" cy="129" r="1.6" fill="#fff"/><rect x="1530" y="104" width="3" height="3" fill="#8a8a8a"/><rect x="1535" y="104" width="3" height="3" fill="#8a8a8a"/><rect x="1530" y="109" width="3" height="3" fill="#8a8a8a"/><rect x="1535" y="109" width="3" height="3" fill="#8a8a8a"/><rect x="1530" y="114" width="3" height="3" fill="#8a8a8a"/><rect x="1535" y="114" width="3" height="3" fill="#8a8a8a"/><rect x="1530" y="119" width="3" height="3" fill="#8a8a8a"/><rect x="1535" y="119" width="3" height="3" fill="#8a8a8a"/><rect x="1530" y="124" width="3" height="3" fill="#8a8a8a"/><rect x="1535" y="124" width="3" height="3" fill="#8a8a8a"/><rect x="1530" y="129" width="3" height="3" fill="#8a8a8a"/><rect x="1535" y="129" width="3" height="3" fill="#8a8a8a"/><rect x="1553" y="100" width="9" height="34" fill="#2a3a55"/><rect x="1561" y="100" width="22" height="34" fill="#5b8fd0" stroke="#2a3a55" stroke-width="1"/><text x="1572" y="126" font-family="Liberation Sans" font-size="21" fill="#fff" text-anchor="middle">?</text><rect x="1608" y="104" width="3" height="3" fill="#8a8a8a"/><rect x="1613" y="104" width="3" height="3" fill="#8a8a8a"/><rect x="1608" y="109" width="3" height="3" fill="#8a8a8a"/><rect x="1613" y="109" width="3" height="3" fill="#8a8a8a"/><rect x="1608" y="114" width="3" height="3" fill="#8a8a8a"/><rect x="1613" y="114" width="3" height="3" fill="#8a8a8a"/><rect x="1608" y="119" width="3" height="3" fill="#8a8a8a"/><rect x="1613" y="119" width="3" height="3" fill="#8a8a8a"/><rect x="1608" y="124" width="3" height="3" fill="#8a8a8a"/><rect x="1613" y="124" width="3" height="3" fill="#8a8a8a"/><rect x="1608" y="129" width="3" height="3" fill="#8a8a8a"/><rect x="1613" y="129" width="3" height="3" fill="#8a8a8a"/></g><rect x="-4" y="162" width="8" height="8" fill="#f2d33a" stroke="#0a1030" stroke-width="1.2"/><rect x="-4" y="169.5" width="15" height="12" fill="#f2d33a" stroke="#0a1030" stroke-width="1.2"/><rect x="-2" y="181" width="19" height="17" rx="2" fill="#d93030"/><circle cx="8" cy="189.5" r="7" fill="#e87070" stroke="#fff" stroke-width="1.6"/><line x1="3" y1="194.5" x2="13" y2="184.5" stroke="#fff" stroke-width="1.6"/><polygon points="27.0,175.5 39.0,175.5 33,182.5" fill="#bdbdbd"/><rect x="53" y="163" width="23" height="23" fill="#f8e04a" stroke="#0a1030" stroke-width="1.5"/><rect x="55" y="165" width="19" height="19" fill="none" stroke="#d8b030" stroke-width="1"/><path d="M81.5 197 C77 190 76 187 76 184 A5.5 5.5 0 1 1 87 184 C87 187 86 190 81.5 197 Z" fill="#7a9ab8"/><circle cx="81.5" cy="184" r="2.2" fill="#333"/></svg>
<div class="a" style="left:0px;top:211px;width:286px;height:893px;background:#333"></div>
<div class="a" style="left:286px;top:210px;width:1px;height:894px;background:#0c0c0c"></div>
<div class="a" style="left:0px;top:292px;width:253px;height:416px;background:#1e1e1e"></div>
<div class="a" style="left:253px;top:292px;width:22px;height:416px;background:#353535"></div>
<div class="a" style="left:253px;top:292px;width:22px;height:21px;border:1px solid #555;background:#3b3b3b"></div>
<div class="a" style="left:253px;top:314px;width:22px;height:260px;border:1px solid #4e4e4e;background:#3a3a3a"></div>
<div class="a" style="left:253px;top:686px;width:22px;height:21px;border:1px solid #555;background:#3b3b3b"></div>
<div class="t" style="left:-3.0px;top:323.6px;font-size:21px;color:#f2f2f2;">tmarks</div>
<div class="t" style="left:-9.0px;top:440.2px;font-size:21px;color:#f2f2f2;">e</div>
<div class="t" style="left:-9.0px;top:610.2px;font-size:21px;color:#f2f2f2;">s</div>
<div class="a" style="left:0px;top:800px;width:275px;height:304px;background:#1e1e1e"></div>
<div class="a" style="left:0px;top:828px;width:275px;height:29px;background:#424242"></div>
<div class="t" style="left:-5.3px;top:803.4px;font-size:22.5px;color:#dedede;font-weight:bold;">a_data</div>
<div class="t" style="left:-2.0px;top:831.9px;font-size:22.5px;color:#fff;font-weight:bold;text-decoration:underline;text-underline-offset:2px;text-decoration-thickness:2.5px;text-decoration-skip-ink:none">pefile</div>
<svg class="full"><polygon points="258,307 270,307 264,300" fill="#c8c8c8"/><polygon points="258,692 270,692 264,699" fill="#c8c8c8"/><rect x="233.5" y="217.5" width="17" height="17" rx="2" fill="none" stroke="#8a8a8a" stroke-width="1.2" stroke-dasharray="2 1"/><rect x="237.5" y="224.5" width="8" height="7" fill="none" stroke="#8a8a8a" stroke-width="1.2"/><rect x="240.5" y="221.5" width="7" height="6" fill="none" stroke="#8a8a8a" stroke-width="1"/><rect x="255.5" y="217.5" width="17" height="17" rx="2" fill="none" stroke="#8a8a8a" stroke-width="1.2" stroke-dasharray="2 1"/><path d="M258 220 L270 232 M270 220 L258 232" stroke="#8a8a8a" stroke-width="2"/><rect x="233.5" y="725.5" width="17" height="17" rx="2" fill="none" stroke="#8a8a8a" stroke-width="1.2" stroke-dasharray="2 1"/><rect x="237.5" y="732.5" width="8" height="7" fill="none" stroke="#8a8a8a" stroke-width="1.2"/><rect x="240.5" y="729.5" width="7" height="6" fill="none" stroke="#8a8a8a" stroke-width="1"/><rect x="255.5" y="725.5" width="17" height="17" rx="2" fill="none" stroke="#8a8a8a" stroke-width="1.2" stroke-dasharray="2 1"/><path d="M258 728 L270 740 M270 728 L258 740" stroke="#8a8a8a" stroke-width="2"/><circle cx="-2" cy="265" r="6" fill="#5b8fd0"/><rect x="31.0" y="712" width="3" height="3" fill="#777"/><rect x="35.6" y="712" width="3" height="3" fill="#777"/><rect x="40.2" y="712" width="3" height="3" fill="#777"/><rect x="44.8" y="712" width="3" height="3" fill="#777"/><rect x="49.4" y="712" width="3" height="3" fill="#777"/><rect x="54.0" y="712" width="3" height="3" fill="#777"/><rect x="280" y="660" width="3" height="3" fill="#6a6a6a"/><rect x="280" y="665" width="3" height="3" fill="#6a6a6a"/><rect x="280" y="670" width="3" height="3" fill="#6a6a6a"/><rect x="280" y="675" width="3" height="3" fill="#6a6a6a"/><rect x="280" y="680" width="3" height="3" fill="#6a6a6a"/><rect x="280" y="685" width="3" height="3" fill="#6a6a6a"/><path d="M-4 772 L4 768 V778 L-4 780 Z" fill="#ddd"/><polygon points="15.0,769.5 27.0,769.5 21,776.5" fill="#bdbdbd"/><path d="M42 764 H62 M42 764 V785 M42 785 H50" stroke="#aaa" stroke-width="1.2" fill="none"/><rect x="47" y="768" width="5" height="5" fill="#f0a030"/><rect x="47" y="778" width="5" height="5" fill="#f0a030"/><path d="M55 762 H61 V776 H65 L58 784 L51 776 H55 Z" fill="#5b8fd0" stroke="#2e4f7a" stroke-width="0.8"/><path d="M82 764 H102 M82 764 V785 M82 785 H90" stroke="#aaa" stroke-width="1.2" fill="none"/><rect x="87" y="768" width="5" height="5" fill="#f0a030"/><rect x="87" y="778" width="5" height="5" fill="#f0a030"/><path d="M95 784 H101 V770 H105 L98 761 L91 770 H95 Z" fill="#5b8fd0" stroke="#2e4f7a" stroke-width="0.8"/><rect x="120" y="762" width="19" height="19" fill="#e6e6e6" stroke="#777" stroke-width="1"/><rect x="133" y="776" width="10" height="7" rx="1.5" fill="#e03040"/><rect x="135" y="779" width="6" height="1.5" fill="#fff"/></svg>
<div class="a" style="left:287px;top:212px;width:1591px;height:892px;background:#fff"></div>
<div class="a" style="left:286px;top:211px;width:1592px;height:1px;background:#050505"></div>
<div class="a" style="left:375px;top:133px;width:1313px;height:892px;border-radius:12px;box-shadow:0 26px 70px rgba(0,0,0,.55),0 0 0 1px #101010"></div>
<div class="a" style="left:375px;top:133px;width:1313px;height:892px;border-radius:12px;background:#343434;overflow:hidden"><div class="a" style="left:-375px;top:-133px;width:1878px;height:1104px">
<div class="a" style="left:375px;top:133px;width:1313px;height:45px;background:#3b393c"></div>
<div class="a" style="left:375px;top:178px;width:1313px;height:1px;background:#121212"></div>
<div class="a" style="left:386.5px;top:145px;width:21px;height:21px;border-radius:50%;background:#ec6a5e"></div>
<div class="a" style="left:418.5px;top:145px;width:21px;height:21px;border-radius:50%;background:#5b595c"></div>
<div class="a" style="left:450.5px;top:145px;width:21px;height:21px;border-radius:50%;background:#5fc454"></div>
<div class="t" style="left:787.0px;top:144.0px;font-size:21.2px;color:#bebcbf;font-weight:bold;">Layer Properties — usa_shapefile — Symbology</div>
<div class="a" style="left:376px;top:179px;width:237px;height:36px;background:#1f1f1f;border-radius:0 0 6px 0"></div>
<div class="a" style="left:376px;top:215px;width:216px;height:810px;background:linear-gradient(90deg,#3f3f3f,#434343)"></div>
<div class="a" style="left:592px;top:215px;width:21px;height:810px;background:#3a3a3a"></div>
<div class="a" style="left:613px;top:215px;width:8px;height:810px;background:#353535"></div>
<div class="a" style="left:592px;top:225px;width:21px;height:21px;border:1px solid #575757;background:#3c3c3c"></div>
<div class="a" style="left:592px;top:247px;width:21px;height:467px;border:1px solid #535353;background:#3c3c3c"></div>
<div class="a" style="left:592px;top:1003px;width:21px;height:21px;border:1px solid #575757;background:#3c3c3c"></div>
<div class="a" style="left:376px;top:339px;width:216px;height:57px;background:#2e2e2e"></div>
<div class="t" style="left:434.0px;top:244.7px;font-size:20px;color:#fafafa;">Information</div>
<div class="t" style="left:434.0px;top:301.7px;font-size:20px;color:#fafafa;">Source</div>
<div class="t" style="left:434.0px;top:416.7px;font-size:20px;color:#fafafa;">Labels</div>
<div class="t" style="left:434.0px;top:473.9px;font-size:20px;color:#fafafa;">Masks</div>
<div class="t" style="left:434.0px;top:531.1px;font-size:20px;color:#fafafa;">3D View</div>
<div class="t" style="left:434.0px;top:588.3px;font-size:20px;color:#fafafa;">Diagrams</div>
<div class="t" style="left:434.0px;top:645.5px;font-size:20px;color:#fafafa;">Fields</div>
<div class="t" style="left:434.0px;top:702.7px;font-size:20px;color:#fafafa;">Attributes Form</div>
<div class="t" style="left:434.0px;top:759.9px;font-size:20px;color:#fafafa;">Joins</div>
<div class="t" style="left:434.0px;top:806.9px;font-size:20px;color:#fafafa;">Auxiliary</div>
<div class="t" style="left:434.0px;top:829.7px;font-size:20px;color:#fafafa;">Storage</div>
<div class="t" style="left:434.0px;top:877.1px;font-size:20px;color:#fafafa;">Actions</div>
<div class="t" style="left:434.0px;top:934.5px;font-size:20px;color:#fafafa;">Display</div>
<div class="t" style="left:434.0px;top:992.1px;font-size:20px;color:#fafafa;">Rendering</div>
<div class="t" style="left:439.0px;top:358.3px;font-size:20px;color:#0c0c0c;text-shadow:none">Symbology</div>
<div class="btn" style="left:621px;top:184px;width:1061px;height:35px;"></div>
<div class="t" style="left:660.5px;top:190.5px;font-size:21.8px;color:#000;text-shadow:none">Categorized</div>
<div class="t" style="left:620.4px;top:239.8px;font-size:21.5px;color:#fafafa;">Value</div>
<div class="a" style="left:739px;top:231px;width:863px;height:36px;background:#1d1d1d;border-radius:4px 0 0 4px"></div>
<div class="t" style="left:745.0px;top:243.5px;font-size:13px;color:#6a6a6a;">abc</div>
<div class="t" style="left:776.3px;top:239.1px;font-size:21.7px;color:#f4f4f4;letter-spacing:0.29px">usa_trifecta_data_Composition</div>
<div class="btn" style="left:1602px;top:232px;width:32px;height:35px;"></div>
<div class="btn" style="left:1646px;top:232px;width:36px;height:35px;"></div>
<div class="t" style="left:620.4px;top:285.5px;font-size:21.5px;color:#fafafa;">Symbol</div>
<div class="btn" style="left:739px;top:280px;width:924px;height:32px;"></div>
<div class="a" style="left:746px;top:288px;width:910px;height:15px;background:#8e589e"></div>
<div class="btn" style="left:1665px;top:280px;width:17px;height:32px;"></div>
<div class="t" style="left:620.4px;top:335.0px;font-size:21.5px;color:#fafafa;">Color ramp</div>
<div class="btn" style="left:739px;top:325px;width:924px;height:41px;"></div>
<div class="t" style="left:900px;width:600px;text-align:center;top:335.2px;font-size:21.3px;color:#e2e2e2;">Random colors</div>
<div class="btn" style="left:1665px;top:325px;width:17px;height:41px;"></div>
<div class="a" style="left:621px;top:378px;width:1061px;height:26px;background:linear-gradient(#404040,#383838);border-bottom:1px solid #262626"></div>
<div class="a" style="left:724px;top:380px;width:1px;height:22px;background:#2a2a2a"></div>
<div class="a" style="left:811px;top:380px;width:1px;height:22px;background:#2a2a2a"></div>
<div class="a" style="left:621px;top:404px;width:1061px;height:481px;background:#1d1d1d"></div>
<div class="t" style="left:624.6px;top:382.6px;font-size:18.5px;color:#f0f0f0;">Symbol</div>
<div class="t" style="left:729.7px;top:382.6px;font-size:18.5px;color:#f0f0f0;">Value</div>
<div class="t" style="left:817.4px;top:382.6px;font-size:18.5px;color:#f0f0f0;">Legend</div>
<div class="a" style="left:622px;top:463px;width:1059px;height:28px;border:1px solid #2f5a8e;background:linear-gradient(#1f2530,#2a3446)"></div>
<div class="a" style="left:626.5px;top:409px;width:21px;height:21px;background:#191919;border:1px solid #262626"></div>
<div class="a" style="left:658px;top:407px;width:26px;height:25px;background:#1428d8;border:1px solid rgba(0,0,0,.3)"></div>
<div class="t" style="left:731.2px;top:407.5px;font-size:21.3px;color:#ececec;">Demo...</div>
<div class="t" style="left:818.7px;top:406.7px;font-size:22.2px;color:#ececec;">Democratic Trifecta</div>
<div class="a" style="left:626.5px;top:438px;width:21px;height:21px;background:#191919;border:1px solid #262626"></div>
<div class="a" style="left:658px;top:436px;width:26px;height:25px;background:#e03a3a;border:1px solid rgba(0,0,0,.3)"></div>
<div class="t" style="left:731.2px;top:436.1px;font-size:21.3px;color:#ececec;">Repu...</div>
<div class="t" style="left:818.7px;top:435.3px;font-size:22.2px;color:#ececec;">Republican Trifecta</div>
<div class="a" style="left:626.5px;top:466px;width:21px;height:21px;background:#191919;border:1px solid #262626"></div>
<div class="a" style="left:658px;top:464px;width:26px;height:25px;background:#dcdde3;border:1px solid rgba(0,0,0,.3)"></div>
<div class="t" style="left:731.2px;top:464.7px;font-size:21.3px;color:#ececec;">Divide...</div>
<div class="t" style="left:818.7px;top:463.9px;font-size:22.2px;color:#ececec;">Divided Government</div>
<div class="a" style="left:626.5px;top:495px;width:21px;height:21px;background:#191919;border:1px solid #262626"></div>
<div class="a" style="left:658px;top:493px;width:26px;height:25px;background:#7fe0cf"></div>
<div class="t" style="left:732.0px;top:493.2px;font-size:21.3px;color:#a0a0a0;font-style:italic;">all oth...</div>
<div class="btn" style="left:621px;top:896px;width:125px;height:36px;"></div>
<div class="btn" style="left:758px;top:896px;width:42px;height:36px;"></div>
<div class="btn" style="left:812px;top:896px;width:42px;height:36px;"></div>
<div class="btn" style="left:866px;top:896px;width:125px;height:36px;"></div>
<div class="btn" style="left:1557px;top:896px;width:125px;height:36px;"></div>
<div class="t" style="left:383.5px;width:600px;text-align:center;top:904.4px;font-size:21.5px;color:#e8e8e8;">Classify</div>
<div class="t" style="left:628.5px;width:600px;text-align:center;top:904.3px;font-size:21.6px;color:#e8e8e8;">Delete All</div>
<div class="t" style="left:561.0px;top:-0.8px;font-size:1px;color:#fff;"></div>
<div class="t" style="left:1562.0px;top:904.4px;font-size:21.5px;color:#e8e8e8;">Advanced</div>
<div class="t" style="left:655.0px;top:947.2px;font-size:21px;color:#fafafa;font-weight:bold;">Layer Rendering</div>
<div class="btn" style="left:621px;top:982px;width:125px;height:36px;"></div>
<div class="btn" style="left:758px;top:982px;width:124px;height:36px;"></div>
<div class="btn" style="left:895px;top:982px;width:125px;height:36px;"></div>
<div class="btn" style="left:1420px;top:982px;width:125px;height:36px;"></div>
<div class="btn" style="left:1555px;top:982px;width:128px;height:35px;background:linear-gradient(#525762,#434852);border:1px solid #1a1a1a;box-shadow:inset 0 2px 0 #5a9be0,inset 2px 0 0 #4a8ad0,inset -2px 0 0 #4a8ad0"></div>
<div class="t" style="left:383.5px;width:600px;text-align:center;top:989.6px;font-size:21.5px;color:#e8e8e8;">Help</div>
<div class="t" style="left:786.4px;top:989.3px;font-size:21.8px;color:#e8e8e8;">Style</div>
<div class="t" style="left:657.5px;width:600px;text-align:center;top:989.2px;font-size:22px;color:#e8e8e8;">Apply</div>
<div class="t" style="left:1182.5px;width:600px;text-align:center;top:989.6px;font-size:21.5px;color:#e8e8e8;">Cancel</div>
<div class="t" style="left:1319px;width:600px;text-align:center;top:989.6px;font-size:21.5px;color:#f0f0f0;">OK</div>
<svg class="full"><circle cx="402" cy="254" r="19.5" fill="#5b8fd0" stroke="#3a6aa8" stroke-width="1.2"/><ellipse cx="398" cy="246" rx="11" ry="7" fill="#8ab4e6" opacity="0.5"/><text x="401" y="266" font-family="Liberation Serif" font-style="italic" font-weight="bold" font-size="30" fill="#fff" text-anchor="middle">i</text><g transform="translate(406,314)"><rect x="-3.2" y="-15.5" width="6.4" height="7" fill="#e8e8e8" stroke="#222" stroke-width="0.8" transform="rotate(22.5)"/><rect x="-3.2" y="-15.5" width="6.4" height="7" fill="#e8e8e8" stroke="#222" stroke-width="0.8" transform="rotate(67.5)"/><rect x="-3.2" y="-15.5" width="6.4" height="7" fill="#e8e8e8" stroke="#222" stroke-width="0.8" transform="rotate(112.5)"/><rect x="-3.2" y="-15.5" width="6.4" height="7" fill="#e8e8e8" stroke="#222" stroke-width="0.8" transform="rotate(157.5)"/><rect x="-3.2" y="-15.5" width="6.4" height="7" fill="#e8e8e8" stroke="#222" stroke-width="0.8" transform="rotate(202.5)"/><rect x="-3.2" y="-15.5" width="6.4" height="7" fill="#e8e8e8" stroke="#222" stroke-width="0.8" transform="rotate(247.5)"/><rect x="-3.2" y="-15.5" width="6.4" height="7" fill="#e8e8e8" stroke="#222" stroke-width="0.8" transform="rotate(292.5)"/><rect x="-3.2" y="-15.5" width="6.4" height="7" fill="#e8e8e8" stroke="#222" stroke-width="0.8" transform="rotate(337.5)"/><circle r="12.5" fill="#e8e8e8"/><circle r="8.3" fill="#6a9ad8" stroke="#3a5a8a" stroke-width="0.6"/></g><line x1="398" y1="306" x2="417" y2="324" stroke="#111" stroke-width="8.5" stroke-linecap="round"/><line x1="398" y1="306" x2="417" y2="324" stroke="#f0d878" stroke-width="6" stroke-linecap="round"/><circle cx="417" cy="324" r="1.5" fill="#333"/><path d="M383 296 C382 304 390 308 397 307 L401 311 L404 307 L400 303 C402 296 397 290 390 292 L394 297 L391 301 Z" fill="#f0f0f0" stroke="#111" stroke-width="1.2" stroke-linejoin="round"/><path d="M394.7 354.3 L414.5 362 L408.3 385 L385.9 374.6 Z" fill="#d03a44"/><path d="M394.7 354.3 L414.5 362 L411.5 373 L390 364.5 Z" fill="#5a8ad0"/><path d="M394.7 354.3 L414.5 362 L413 367.5 L392.5 359.5 Z" fill="#e0d050"/><line x1="410" y1="369" x2="424" y2="355" stroke="#c9a060" stroke-width="4.5" stroke-linecap="round"/><path d="M397 378 L407 367 L417 376 L407 386 Z" fill="#c8b088" stroke="#8a6a40" stroke-width="1"/><path d="M400 375 L410 384 M403 372 L413 381 M406 369 L415 378" stroke="#9a8060" stroke-width="0.8"/><path d="M383 426.5 L392.5 417 H423 V436 H392.5 Z" fill="#f2d33a" stroke="#6a5a10" stroke-width="2" stroke-linejoin="round"/><text x="405.84999999999997" y="431.82" font-family="Liberation Sans" font-weight="bold" font-size="15" fill="#111" text-anchor="middle">abc</text><rect x="380" y="470" width="45" height="25" rx="12" fill="#eef2fa" stroke="#1a1a1a" stroke-width="1.2"/><text x="402.5" y="489.5" font-family="Liberation Sans" font-weight="bold" font-size="21" fill="#1a1a1a" text-anchor="middle" letter-spacing="-0.5">abc</text><path d="M402 521 L420 531 L402 541 L384 531 Z" fill="#f08a8a" stroke="#a02a2a" stroke-width="1.5"/><path d="M384 531 L402 541 V561 L384 551 Z" fill="#8ad040" stroke="#4a8a20" stroke-width="1.5"/><path d="M420 531 L402 541 V561 L420 551 Z" fill="#f2d84a" stroke="#9a8a20" stroke-width="1.5"/><circle cx="396" cy="590" r="11" fill="#c0392b" stroke="#333" stroke-width="1"/><path d="M396 590 L396 579 A11 11 0 0 0 386.5 584.5 Z" fill="#f2c94c"/><path d="M396 590 L386.5 584.5 A11 11 0 0 0 396 601 Z" fill="#5ab05a"/><rect x="398" y="603" width="8" height="14" fill="#f2c94c" stroke="#333" stroke-width="0.8"/><rect x="406" y="595" width="6" height="22" fill="#5ab05a" stroke="#333" stroke-width="0.8"/><rect x="413" y="608" width="7" height="9" fill="#c0392b" stroke="#333" stroke-width="0.8"/><rect x="383" y="636" width="37" height="37" fill="#dfe6f0" stroke="#5b8fd0" stroke-width="2"/><line x1="386" y1="645" x2="417" y2="645" stroke="#4a7ac0" stroke-width="1.3"/><line x1="386" y1="652" x2="417" y2="652" stroke="#4a7ac0" stroke-width="1.3"/><line x1="386" y1="659" x2="417" y2="659" stroke="#4a7ac0" stroke-width="1.3"/><line x1="386" y1="666" x2="417" y2="666" stroke="#4a7ac0" stroke-width="1.3"/><rect x="391" y="634" width="10" height="42" fill="#f0e8a8" stroke="#f5e830" stroke-width="1.5"/><rect x="394" y="639" width="3" height="3" fill="#fff"/><rect x="384" y="693" width="37" height="37" fill="#e6e9ee" stroke="#5b8fd0" stroke-width="2"/><rect x="389" y="703" width="6" height="3" fill="#2e4f7a"/><rect x="389" y="718" width="6" height="3" fill="#2e4f7a"/><rect x="399" y="697" width="18" height="12" fill="#f4f8fc" stroke="#5b8fd0" stroke-width="1.5"/><rect x="399" y="713" width="18" height="12" fill="#f4f8fc" stroke="#5b8fd0" stroke-width="1.5"/><circle cx="386" cy="770" r="4" fill="#5b8fd0"/><path d="M392 770 L422 752 V788 Z" fill="#4a7ac0"/><path d="M392 770 L422 752 V770 Z" fill="#6a9ad8"/><path d="M402 810 H416 L422 816 V846 H402 Z" fill="#fafafa" stroke="#ccc" stroke-width="1"/><path d="M382 822 V846 C382 852 406 852 406 846 V822 Z" fill="#d0d0d0" stroke="#777" stroke-width="1"/><ellipse cx="394" cy="822" rx="12" ry="4.5" fill="#e8e8e8" stroke="#777" stroke-width="1"/><path d="M382 834 C382 839 406 839 406 834" fill="none" stroke="#777" stroke-width="1"/><g transform="translate(406,883)"><rect x="-3.5" y="-18" width="7" height="8" fill="#ddd" transform="rotate(0)"/><rect x="-3.5" y="-18" width="7" height="8" fill="#ddd" transform="rotate(36)"/><rect x="-3.5" y="-18" width="7" height="8" fill="#ddd" transform="rotate(72)"/><rect x="-3.5" y="-18" width="7" height="8" fill="#ddd" transform="rotate(108)"/><rect x="-3.5" y="-18" width="7" height="8" fill="#ddd" transform="rotate(144)"/><rect x="-3.5" y="-18" width="7" height="8" fill="#ddd" transform="rotate(180)"/><rect x="-3.5" y="-18" width="7" height="8" fill="#ddd" transform="rotate(216)"/><rect x="-3.5" y="-18" width="7" height="8" fill="#ddd" transform="rotate(252)"/><rect x="-3.5" y="-18" width="7" height="8" fill="#ddd" transform="rotate(288)"/><rect x="-3.5" y="-18" width="7" height="8" fill="#ddd" transform="rotate(324)"/><circle r="14" fill="#ddd"/><circle r="10" fill="#5b8fd0" stroke="#3a6aa8"/><path d="M-3 -5 L5 0 L-3 5 Z" fill="#fff"/></g><g transform="translate(389,900)"><rect x="-2" y="-8" width="4" height="4" fill="#ddd" transform="rotate(0)"/><rect x="-2" y="-8" width="4" height="4" fill="#ddd" transform="rotate(45)"/><rect x="-2" y="-8" width="4" height="4" fill="#ddd" transform="rotate(90)"/><rect x="-2" y="-8" width="4" height="4" fill="#ddd" transform="rotate(135)"/><rect x="-2" y="-8" width="4" height="4" fill="#ddd" transform="rotate(180)"/><rect x="-2" y="-8" width="4" height="4" fill="#ddd" transform="rotate(225)"/><rect x="-2" y="-8" width="4" height="4" fill="#ddd" transform="rotate(270)"/><rect x="-2" y="-8" width="4" height="4" fill="#ddd" transform="rotate(315)"/><circle r="6" fill="#ddd"/><circle r="4.5" fill="#5b8fd0"/></g><path d="M389 928 H414 C419 928 420 931 420 935 V945 C420 949 418 951 414 951 H402 L393 960 L395 951 H389 C385 951 384 949 384 945 V935 C384 931 385 928 389 928 Z" fill="#e6d27a" stroke="#b8a040" stroke-width="1"/><path d="M390 940 C390 934 392 933 398 933" stroke="#fff" stroke-width="2" fill="none"/><path d="M385 1003 L395 993 L407 1005 L397 1015 Z" fill="#e8b860" stroke="#9a7030" stroke-width="1"/><line x1="388" y1="1000" x2="400" y2="1012" stroke="#b88a40" stroke-width="0.8"/><line x1="391" y1="997" x2="403" y2="1009" stroke="#b88a40" stroke-width="0.8"/><line x1="394" y1="994" x2="406" y2="1006" stroke="#b88a40" stroke-width="0.8"/><line x1="397" y1="991" x2="409" y2="1003" stroke="#b88a40" stroke-width="0.8"/><line x1="403" y1="997" x2="419" y2="984" stroke="#d9a040" stroke-width="4" stroke-linecap="round"/><path d="M631 419.0 L636 426.0 L643 413.0" fill="none" stroke="#cfcfcf" stroke-width="2.4"/><path d="M631 447.6 L636 454.6 L643 441.6" fill="none" stroke="#cfcfcf" stroke-width="2.4"/><path d="M631 476.2 L636 483.2 L643 470.2" fill="none" stroke="#cfcfcf" stroke-width="2.4"/><polygon points="707.0,385.0 720.0,385.0 713.5,393.0" fill="#bdbdbd"/><rect x="633" y="190.5" width="17" height="6" fill="#4ab8c8" stroke="#1a3ad0" stroke-width="1.5"/><rect x="636.5" y="199" width="16.5" height="5.5" fill="#50c860" stroke="#1f5a30" stroke-width="1.5"/><rect x="633" y="207" width="17" height="5.5" fill="#d04020" stroke="#6a1010" stroke-width="1.5"/><polygon points="1657.0,198.0 1671.0,198.0 1664,205.0" fill="#151515"/><polygon points="1611.0,246.0 1625.0,246.0 1618,253.0" fill="#151515"/><text x="1663.5" y="257" font-family="Liberation Serif" font-size="30" fill="#6a3888" text-anchor="middle">ε</text><polygon points="1667.5,292.5 1679.5,292.5 1673.5,299.5" fill="#d0d0d0"/><polygon points="1667.5,342.0 1679.5,342.0 1673.5,349.0" fill="#d0d0d0"/><circle cx="397" cy="195" r="6.5" fill="none" stroke="#9a9a9a" stroke-width="2"/><line x1="402" y1="200" x2="407" y2="205" stroke="#9a9a9a" stroke-width="3" stroke-linecap="round"/><polygon points="596,240 609,240 602.5,233" fill="#c8c8c8"/><polygon points="596,1009 609,1009 602.5,1016" fill="#c8c8c8"/><rect x="617" y="590" width="3" height="3" fill="#6a6a6a"/><rect x="617" y="595" width="3" height="3" fill="#6a6a6a"/><rect x="617" y="600" width="3" height="3" fill="#6a6a6a"/><rect x="617" y="605" width="3" height="3" fill="#6a6a6a"/><rect x="617" y="610" width="3" height="3" fill="#6a6a6a"/><rect x="617" y="615" width="3" height="3" fill="#6a6a6a"/><path d="M775.5 904.5 H782.5 V910.5 H788.5 V917.5 H782.5 V923.5 H775.5 V917.5 H769.5 V910.5 H775.5 Z" fill="#f4faf4" stroke="#2e8a3a" stroke-width="1.3"/><rect x="823" y="910" width="21" height="8" fill="#fff" stroke="#d93030" stroke-width="2.5"/><path d="M628 950 L640 958 L628 966 Z" fill="none" stroke="#111" stroke-width="1.5"/><polygon points="865.0,997.5 876.0,997.5 870.5,1003.5" fill="#c0c0c0"/><polygon points="1664.0,912.0 1673.0,912.0 1668.5,917.0" fill="#c0c0c0"/></svg>
</div></div>
<div class="a" style="left:375px;top:133px;width:1313px;height:892px;border-radius:12px;border:1px solid #666;pointer-events:none"></div>
<div class="a" style="left:882px;top:965px;width:168px;height:58px;border:3px solid #e0402a"></div>
<div class="a" style="left:1547px;top:972px;width:146px;height:47px;border:3px solid #e0402a"></div>
</body></html>
